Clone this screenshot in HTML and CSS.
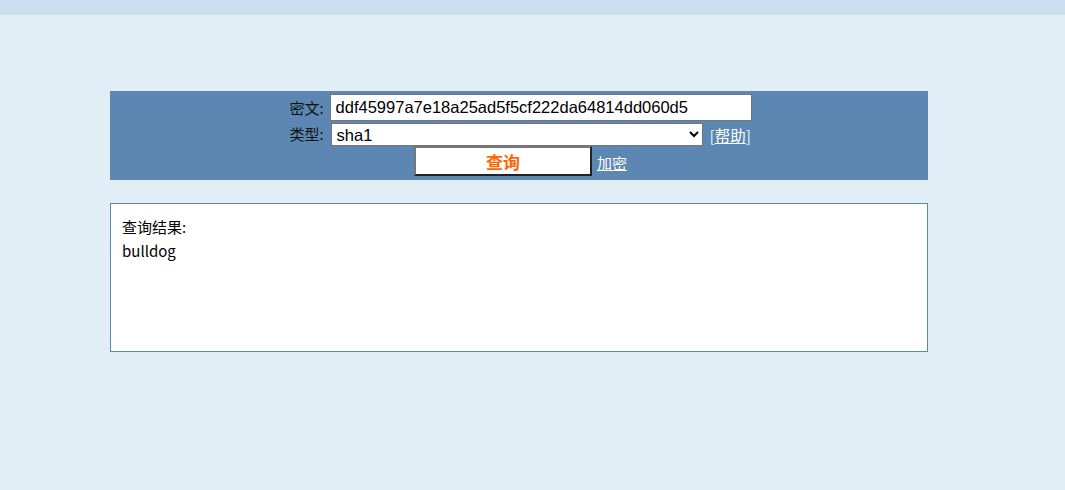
FILE: index.html
```html
<!DOCTYPE html>
<html lang="zh">
<head>
<meta charset="utf-8">
<title>查询</title>
<link rel="stylesheet" href="styles.css">
</head>
<body>
<div class="topbar"></div>
<div class="main">
  <form class="panel">
    <div class="grid">
      <label class="lbl">密文:</label>
      <div class="field"><input class="txt" type="text" value="ddf45997a7e18a25ad5f5cf222da64814dd060d5"></div>
      <label class="lbl">类型:</label>
      <div class="field row2">
        <select class="sel"><option>sha1</option></select>
        <span class="help">[<a href="#">帮助</a>]</span>
      </div>
      <div class="actions">
        <button class="btn" type="button">查询</button>
        <a class="enc" href="#">加密</a>
      </div>
    </div>
  </form>
  <div class="result">
    <div class="rtitle">查询结果:</div>
    <div class="rval">bulldog</div>
  </div>
</div>
</body>
</html>
```
FILE: styles.css
```css
html, body { margin: 0; padding: 0; }
body {
  background: #e1eef6;
  font-family: "Noto Sans CJK SC", "Noto Sans", sans-serif;
  font-size: 15px;
  color: #000;
  height: 490px;
}
.topbar { height: 15px; background: #cbe0ee; }
.main { padding: 76px 0 0 110px; width: 818px; }
.panel {
  background: #5b87b2;
  height: 89px;
  display: flex;
  justify-content: center;
  margin: 0;
}
.grid {
  display: grid;
  grid-template-columns: auto auto;
  align-content: start;
  padding-top: 3px;
  padding-left: 3px;
}
.lbl {
  padding-right: 6px;
  display: flex;
  align-items: center;
  justify-content: flex-end;
  font-size: 15px;
  line-height: 16px;
  color: #111;
}
.field { display: flex; align-items: center; }
.txt {
  width: 422px;
  height: 27px;
  box-sizing: border-box;
  margin: 0;
  border: 1px solid #767676;
  padding: 0 5px;
  font-family: "Liberation Sans", Arial, sans-serif;
  font-size: 16.5px;
  color: #000;
  background: #fff;
}
.row2 { padding-top: 2px; }
.sel {
  width: 372px;
  height: 23px;
  box-sizing: border-box;
  margin: 0 0 0 1px;
  border: 1px solid #767676;
  border-radius: 0;
  font-family: "Liberation Sans", Arial, sans-serif;
  font-size: 16.5px;
  padding: 0 1px;
  background: #fff;
  color: #000;
}
.help {
  margin-left: 7px;
  color: #e8f0f8;
  font-size: 15.5px;
}
.help a, .enc { color: #fff; text-decoration: underline; }
.actions {
  grid-column: 1 / 3;
  display: flex;
  justify-content: center;
  align-items: center;
  gap: 5px;
}
.btn {
  width: 178px;
  height: 30px;
  box-sizing: border-box;
  background: #fff;
  border: 2px solid;
  border-color: #767676 #222 #222 #767676;
  color: #ff6600;
  font-weight: bold;
  font-size: 17px;
  font-family: "Noto Sans CJK SC", sans-serif;
  padding: 0;
  margin: 0;
}
.enc { font-size: 15px; margin-top: 3px; }
.result {
  margin-top: 23px;
  height: 149px;
  box-sizing: border-box;
  background: #fff;
  border: 1px solid #5b87b2;
  padding: 11px 11px;
  font-size: 15px;
  line-height: 24px;
}
```
